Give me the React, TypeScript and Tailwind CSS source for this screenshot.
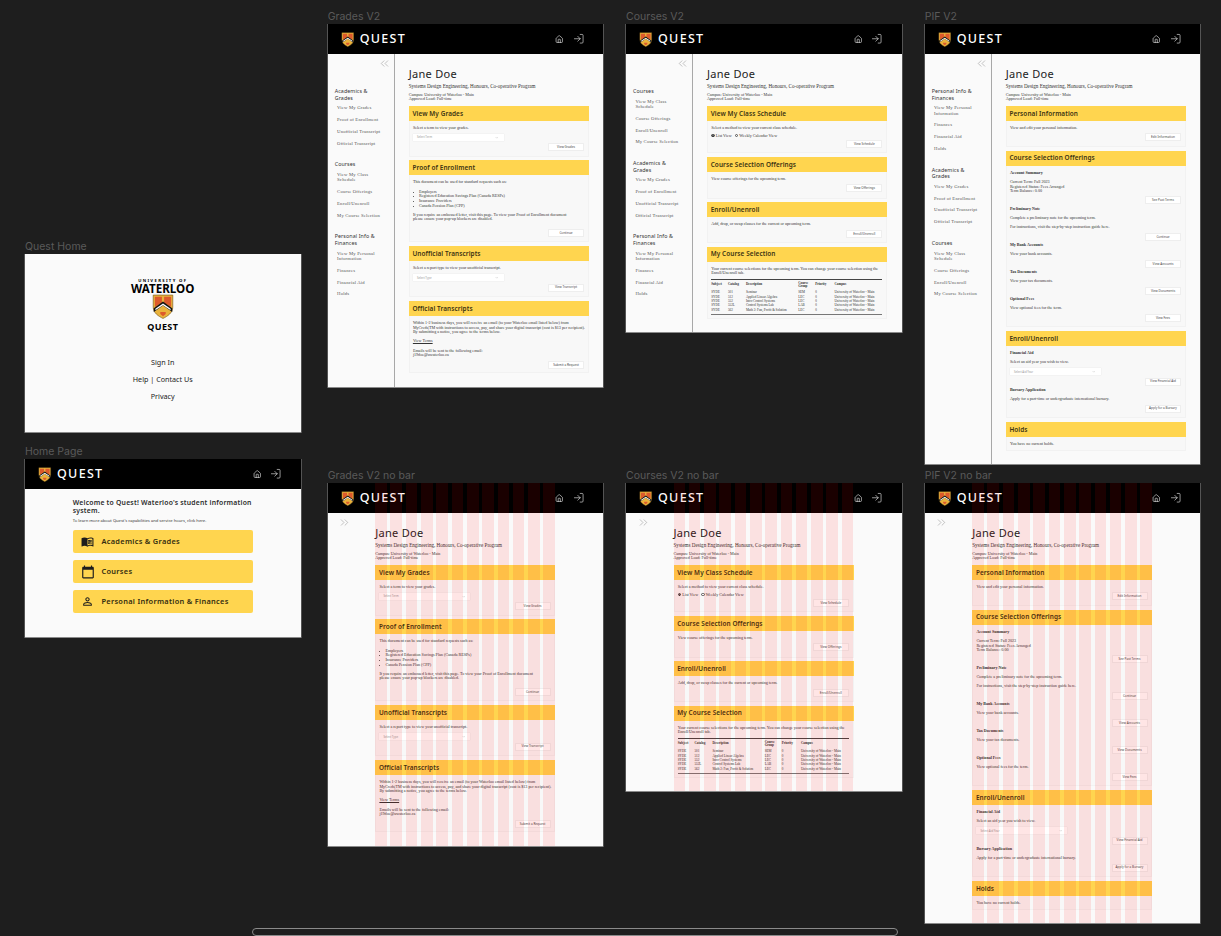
import type { ReactNode } from "react";
import { ChevronDown, ChevronsLeft, ChevronsRight, House, LogIn } from "lucide-react";
import { MdCalendarToday, MdMenuBook, MdPersonOutline } from "react-icons/md";

const serif = "font-['Liberation_Serif',serif]";
const sans = "font-['Noto_Sans',sans-serif]";

function Shield({ className }: { className: string }) {
  return (
    <svg viewBox="0 0 40 46" className={className}>
      <path d="M2 2 H38 V24 C38 35 28 41 20 45 C12 41 2 35 2 24 Z" fill="#eab33c" stroke="#7a5a1e" strokeWidth="1.2" />
      <path d="M5 5 H18 V16 L5 24 Z" fill="#dc5a2c" />
      <path d="M22 5 H35 V24 L22 16 Z" fill="#dc5a2c" />
      <path d="M3 26 L20 14 L37 26 V33 L20 21 L3 33 Z" fill="#111" />
      <path d="M6 27 L20 17.5 L34 27 V30 L20 20.5 L6 30 Z" fill="#fff" />
      <path d="M15 33 H25 V37 L20 41 L15 37 Z" fill="#dc5a2c" />
    </svg>
  );
}

function Header() {
  return (
    <header className="flex h-[30px] shrink-0 items-center bg-black pr-[19px] pl-[13px] text-white">
      <Shield className="h-[15px] w-[13.5px]" />
      <span className={`${sans} ml-[5.5px] text-[12.5px] leading-none font-medium tracking-[1.3px]`}>QUEST</span>
      <House className="ml-auto size-[8.5px]" strokeWidth={1.6} />
      <LogIn className="ml-[9px] size-[11.5px]" strokeWidth={1.2} />
    </header>
  );
}

function Frame({ label, className, children }: { label: string; className: string; children: ReactNode }) {
  return (
    <section className={`absolute w-[275.5px] bg-[#fafafa] shadow-[0_0.5px_0_0.5px_#8a8a8a] ${className}`}>
      <div className="absolute top-[-14.5px] left-0 font-['Inter',sans-serif] text-[10.5px] leading-[14px] whitespace-nowrap text-[#5a5a5a]">
        {label}
      </div>
      {children}
    </section>
  );
}

type NavGroup = { title: string; items: string[] };

const academics: NavGroup = {
  title: "Academics &\nGrades",
  items: ["View My Grades", "Proof of Enrollment", "Unofficial Transcript", "Official Transcript"],
};
const courses: NavGroup = {
  title: "Courses",
  items: ["View My Class\nSchedule", "Course Offerings", "Enroll/Unenroll", "My Course Selection"],
};
const finances: NavGroup = {
  title: "Personal Info &\nFinances",
  items: ["View My Personal\nInformation", "Finances", "Financial Aid", "Holds"],
};

function Sidebar({ groups }: { groups: NavGroup[] }) {
  return (
    <aside className="w-[67px] shrink-0 border-r border-[#a8a8a8]">
      <div className="flex justify-end pt-[2.5px] pr-[3px] pb-[18.5px]">
        <ChevronsLeft className="size-[13px] text-[#777]" strokeWidth={0.8} />
      </div>
      {groups.map((group) => (
        <div key={group.title} className="mb-[15.3px] pl-[7px]">
          <div className={`${sans} text-[5.3px] leading-[6.6px] tracking-[0.1px] whitespace-pre-line text-[#333]`}>
            {group.title}
          </div>
          <ul className="mt-[4px] flex flex-col gap-[6.4px] pl-[2.4px]">
            {group.items.map((item) => (
              <li key={item} className={`${serif} text-[4.7px] leading-[5.4px] tracking-[0.18px] whitespace-pre-line text-[#555]`}>
                {item}
              </li>
            ))}
          </ul>
        </div>
      ))}
    </aside>
  );
}

function Card({ title, bodyClass, children }: { title: string; bodyClass: string; children: ReactNode }) {
  return (
    <div className="w-[180px]">
      <h2 className={`${sans} flex h-[15px] items-center bg-[#ffd54f] pl-[3.7px] text-[6.4px] font-semibold tracking-[0.1px] text-[#3b3312]`}>
        {title}
      </h2>
      <div className={`border-x border-b border-[#f2f2f2] bg-[#f8f8f8] pt-[5px] pr-[3.7px] pl-[3.2px] ${bodyClass}`}>{children}</div>
    </div>
  );
}

function P({ className = "", children }: { className?: string; children: ReactNode }) {
  return <p className={`${serif} text-[4.1px] leading-[4.67px] whitespace-nowrap text-[#333] ${className}`}>{children}</p>;
}

function Bold({ className = "", children }: { className?: string; children: ReactNode }) {
  return <p className={`${serif} text-[4.1px] leading-[4.67px] font-bold text-[#333] ${className}`}>{children}</p>;
}

function Btn({ className = "", children }: { className?: string; children: ReactNode }) {
  return (
    <div className={`ml-auto flex h-[8px] w-[36px] items-center justify-center rounded-[0.5px] border border-[#eee] bg-white ${sans} text-[3.1px] text-[#444] ${className}`}>
      {children}
    </div>
  );
}

function Select({ className = "", label }: { className?: string; label: string }) {
  return (
    <div className={`flex h-[7.5px] w-[90.7px] items-center justify-between bg-white pr-[5px] pl-[4px] shadow-[0_0_1px_#ddd] ${sans} text-[2.8px] text-[#999] ${className}`}>
      {label}
      <ChevronDown className="size-[3.5px] text-[#777]" strokeWidth={1.5} />
    </div>
  );
}

function Identity({ children }: { children: ReactNode }) {
  return (
    <div className="relative w-[180px] pt-[13px]">
      <h1 className={`${sans} text-[11px] leading-[13px] tracking-[0.3px] text-[#222]`}>Jane Doe</h1>
      <p className={`${serif} mt-[3px] text-[5.1px] leading-[6px] text-[#333]`}>
        Systems Design Engineering, Honours, Co-operative Program
      </p>
      <p className={`${serif} mt-[3.6px] text-[4.1px] leading-[4.67px] text-[#333]`}>
        Campus: University of Waterloo - Main
        <br />
        Approved Load: Full-time
      </p>
      <div className="mt-[4px] flex flex-col gap-[3.8px]">{children}</div>
    </div>
  );
}

function GradesCards() {
  return (
    <Identity>
      <Card title="View My Grades" bodyClass="h-[35.7px]">
        <P>Select a term to view your grades.</P>
        <Select className="mt-[3px]" label="Select Term" />
        <Btn className="mt-[2.2px]">View Grades</Btn>
      </Card>
      <Card title="Proof of Enrollment" bodyClass="h-[67px]">
        <P>This document can be used for standard requests such as:</P>
        <ul className={`${serif} mt-[4.6px] list-inside list-disc text-[4.1px] leading-[4.67px] text-[#333]`}>
          <li>Employers</li>
          <li>Registered Education Savings Plan (Canada RESPs)</li>
          <li>Insurance Providers</li>
          <li>Canada Pension Plan (CPP)</li>
        </ul>
        <P className="mt-[4.3px]">
          If you require an embossed letter, visit this page. To view your Proof of Enrollment document
          <br />
          please ensure your pop-up blockers are disabled.
        </P>
        <Btn className="mt-[7.3px]">Continue</Btn>
      </Card>
      <Card title="Unofficial Transcripts" bodyClass="h-[36px]">
        <P>Select a report type to view your unofficial transcript.</P>
        <Select className="mt-[3px]" label="Select Type" />
        <Btn className="mt-[2.2px]">View Transcript</Btn>
      </Card>
      <Card title="Official Transcripts" bodyClass="h-[57.3px]">
        <P>
          Within 1-2 business days, you will receive an email (to your Waterloo email listed below) from
          <br />
          MyCreds|TM with instructions to access, pay, and share your digital transcript (cost is $13 per recipient).
          <br />
          By submitting a notice, you agree to the terms below.
        </P>
        <P className="mt-[4.3px] underline">View Terms</P>
        <P className="mt-[4.6px]">
          Emails will be sent to the following email:
          <br />
          j19doe@uwaterloo.ca
        </P>
        <Btn className="mt-[3px]">Submit a Request</Btn>
      </Card>
    </Identity>
  );
}

const selection = [
  ["SYDE", "501", "Seminar", "SEM", "0"],
  ["SYDE", "512", "Applied Linear Algebra", "LEC", "0"],
  ["SYDE", "552", "Intro Control Systems", "LEC", "0"],
  ["SYDE", "552L", "Control Systems Lab", "LAB", "0"],
  ["SYDE", "562", "Math 2: Fun, Profit & Solution", "LEC", "0"],
];

const tableCols = "grid grid-cols-[16.7px_18px_52.3px_17px_19.3px_1fr]";

function CoursesCards() {
  return (
    <Identity>
      <Card title="View My Class Schedule" bodyClass="h-[32.3px]">
        <P>Select a method to view your current class schedule.</P>
        <div className={`${serif} mt-[2.7px] flex h-[4.67px] items-center text-[4.1px] text-[#333]`}>
          <span className="flex size-[3.6px] items-center justify-center rounded-full border-[0.5px] border-[#333]">
            <span className="size-[2px] rounded-full bg-[#333]" />
          </span>
          <span className="ml-[1px]">List View</span>
          <span className="ml-[3px] size-[3.6px] rounded-full border-[0.5px] border-[#555]" />
          <span className="ml-[1px]">Weekly Calendar View</span>
        </div>
        <Btn className="mt-[2.3px]">View Schedule</Btn>
      </Card>
      <Card title="Course Selection Offerings" bodyClass="h-[26.6px]">
        <P>View course offerings for the upcoming term.</P>
        <Btn className="mt-[2.7px]">View Offerings</Btn>
      </Card>
      <Card title="Enroll/Unenroll" bodyClass="h-[25.5px]">
        <P>Add, drop, or swap classes for the current or upcoming term.</P>
        <Btn className="mt-[3px]">Enroll/Unenroll</Btn>
      </Card>
      <Card title="My Course Selection" bodyClass="h-[57.5px]">
        <P>
          Your current course selections for the upcoming term. You can change your course selection using the
          <br />
          Enroll/Unenroll tab.
        </P>
        <div className={`${serif} mt-[2.6px] border-t border-b border-t-[#444] border-b-[#777] pb-[2.4px] text-[3.3px] leading-[4.35px] text-[#333]`}>
          <div className={`${tableCols} h-[10.5px] items-center font-bold leading-[3.4px]`}>
            <span>Subject</span>
            <span>Catalog</span>
            <span>Description</span>
            <span>
              Course
              <br />
              Group
            </span>
            <span>Priority</span>
            <span>Campus</span>
          </div>
          {selection.map((row) => (
            <div key={row[1]} className={tableCols}>
              {row.map((cell, i) => (
                <span key={i}>{cell}</span>
              ))}
              <span className="whitespace-nowrap">University of Waterloo - Main</span>
            </div>
          ))}
        </div>
      </Card>
    </Identity>
  );
}

function PifCards() {
  return (
    <Identity>
      <Card title="Personal Information" bodyClass="h-[26px]">
        <P>View and edit your personal information.</P>
        <Btn className="mt-[2.7px]">Edit Information</Btn>
      </Card>
      <Card title="Course Selection Offerings" bodyClass="h-[161.5px]">
        <Bold>Account Summary</Bold>
        <P className="mt-[4.6px]">
          Current Term: Fall 2023
          <br />
          Registered Status: Fees Arranged
          <br />
          Term Balance: 0.00
        </P>
        <Btn className="mt-[2.3px]">See Past Terms</Btn>
        <Bold className="mt-[2.6px]">Preliminary Note</Bold>
        <P className="mt-[4.6px]">Complete a preliminary note for the upcoming term.</P>
        <P className="mt-[4.6px]">For instructions, visit the step-by-step instruction guide here.</P>
        <Btn className="mt-[2.9px]">Continue</Btn>
        <Bold className="mt-[2.2px]">My Bank Accounts</Bold>
        <P className="mt-[4.6px]">View your bank accounts.</P>
        <Btn className="mt-[2.9px]">View Accounts</Btn>
        <Bold className="mt-[2.2px]">Tax Documents</Bold>
        <P className="mt-[4.6px]">View your tax documents.</P>
        <Btn className="mt-[2.9px]">View Documents</Btn>
        <Bold className="mt-[2.2px]">Optional Fees</Bold>
        <P className="mt-[4.6px]">View optional fees for the term.</P>
        <Btn className="mt-[2.9px]">View Fees</Btn>
      </Card>
      <Card title="Enroll/Unenroll" bodyClass="h-[72.2px]">
        <Bold>Financial Aid</Bold>
        <P className="mt-[4.6px]">Select an aid year you wish to view.</P>
        <Select className="mt-[2.9px]" label="Select Aid Year" />
        <Btn className="mt-[2.2px]">View Financial Aid</Btn>
        <Bold className="mt-[2.2px]">Bursary Application</Bold>
        <P className="mt-[4.6px]">Apply for a part-time or undergraduate international bursary.</P>
        <Btn className="mt-[2.9px]">Apply for a Bursary</Btn>
      </Card>
      <Card title="Holds" bodyClass="h-[14px]">
        <P>You have no current holds.</P>
      </Card>
    </Identity>
  );
}

function BarScreen({ groups, children }: { groups: NavGroup[]; children: ReactNode }) {
  return (
    <div className="flex h-full flex-col">
      <Header />
      <div className="flex min-h-0 flex-1">
        <Sidebar groups={groups} />
        <main className="pl-[14px]">{children}</main>
      </div>
    </div>
  );
}

function LayoutGrid() {
  return (
    <div className="pointer-events-none absolute inset-y-0 left-[47.5px] flex w-[180px] justify-between">
      {Array.from({ length: 12 }, (_, i) => (
        <span key={i} className="w-[11.6px] bg-[#ff0000]/10" />
      ))}
    </div>
  );
}

function NoBarScreen({ children }: { children: ReactNode }) {
  return (
    <div className="relative flex h-full flex-col overflow-hidden">
      <Header />
      <div className="flex min-h-0 flex-1">
        <div className="w-[47.5px] shrink-0 pt-[2.5px] pl-[10.5px]">
          <ChevronsRight className="size-[13px] text-[#777]" strokeWidth={0.8} />
        </div>
        <main>{children}</main>
      </div>
      <LayoutGrid />
    </div>
  );
}

function QuestHome() {
  return (
    <div className={`${sans} flex h-full flex-col items-center pt-[23.5px] text-black`}>
      <div className="text-[4.2px] leading-[5px] font-bold tracking-[1.35px]">UNIVERSITY OF</div>
      <div className="text-[11.6px] leading-[11px] font-bold">WATERLOO</div>
      <Shield className="mt-[0.5px] h-[25px] w-[22px]" />
      <div className="mt-[2px] text-[9px] leading-[11px] font-bold tracking-[0.4px]">QUEST</div>
      <ul className="mt-[24.5px] flex flex-col items-center gap-[7.4px] text-[7.2px] leading-[10px] text-[#222]">
        <li>Sign In</li>
        <li>Help | Contact Us</li>
        <li>Privacy</li>
      </ul>
    </div>
  );
}

const homeLinks = [
  { label: "Academics & Grades", icon: <MdMenuBook className="size-[13px]" /> },
  { label: "Courses", icon: <MdCalendarToday className="size-[14px]" /> },
  { label: "Personal Information & Finances", icon: <MdPersonOutline className="size-[13px]" /> },
];

function HomePage() {
  return (
    <div className="flex h-full flex-col">
      <Header />
      <div className={`${sans} mx-auto w-[180px] pt-[10.3px] text-[#2b2b2b]`}>
        <p className="text-[6.8px] leading-[8px] font-semibold tracking-[0.22px]">
          Welcome to Quest! Waterloo's student information system.
        </p>
        <p className="mt-[3px] text-[4.1px] leading-[5px] text-[#333]">
          To learn more about Quest's capabilities and service hours, click here.
        </p>
        <div className="mt-[6.5px] flex flex-col gap-[6.3px]">
          {homeLinks.map((link) => (
            <div key={link.label} className="flex h-[23.7px] items-center rounded-[2px] bg-[#ffd54f]">
              <span className="flex w-[28.7px] justify-center pl-[1.5px] text-[#1d1d1d]">{link.icon}</span>
              <span className="text-[7.4px] font-semibold tracking-[0.3px] text-[#332c10]">{link.label}</span>
            </div>
          ))}
        </div>
      </div>
    </div>
  );
}

export default function App() {
  return (
    <div className="relative h-[936px] w-[1221px] overflow-hidden bg-[#1e1e1e]">
      <Frame label="Quest Home" className="top-[254px] left-[25px] h-[178px]">
        <QuestHome />
      </Frame>
      <Frame label="Home Page" className="top-[459px] left-[25px] h-[178px]">
        <HomePage />
      </Frame>

      <Frame label="Grades V2" className="top-[24px] left-[327.7px] h-[362.8px]">
        <BarScreen groups={[academics, courses, finances]}>
          <GradesCards />
        </BarScreen>
      </Frame>
      <Frame label="Courses V2" className="top-[24px] left-[626px] h-[308.3px]">
        <BarScreen groups={[courses, academics, finances]}>
          <CoursesCards />
        </BarScreen>
      </Frame>
      <Frame label="PIF V2" className="top-[24px] left-[924.7px] h-[440.3px]">
        <BarScreen groups={[finances, academics, courses]}>
          <PifCards />
        </BarScreen>
      </Frame>

      <Frame label="Grades V2 no bar" className="top-[483px] left-[327.7px] h-[362.5px]">
        <NoBarScreen>
          <GradesCards />
        </NoBarScreen>
      </Frame>
      <Frame label="Courses V2 no bar" className="top-[483px] left-[626px] h-[307.7px]">
        <NoBarScreen>
          <CoursesCards />
        </NoBarScreen>
      </Frame>
      <Frame label="PIF V2 no bar" className="top-[483px] left-[924.7px] h-[440.3px]">
        <NoBarScreen>
          <PifCards />
        </NoBarScreen>
      </Frame>

      {/* canvas scrollbar */}
      <div className="absolute top-[928px] left-[252px] h-[8px] w-[646px] rounded-[4px] border border-[#8a8a8a]" />
    </div>
  );
}
